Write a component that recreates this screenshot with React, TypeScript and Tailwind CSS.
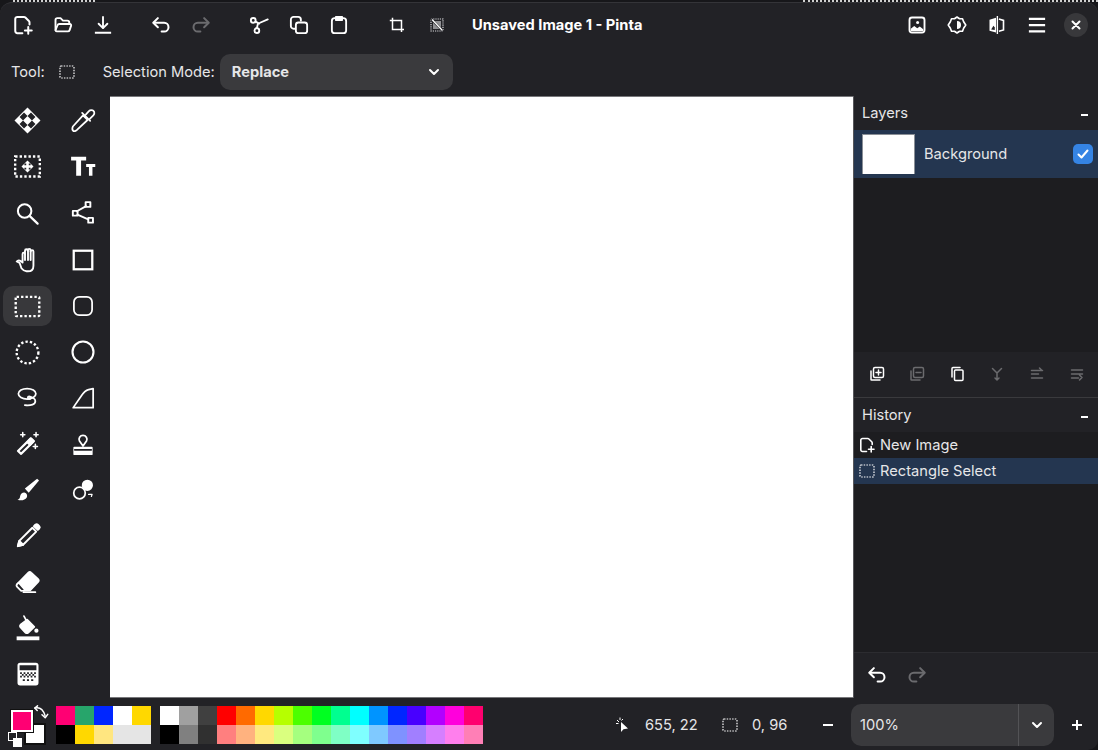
import type { ReactNode } from 'react'

// Pinta main window, everything sits on a 16px icon grid like the GTK symbolic set
function Ico({ children, size = 20, className = 'text-white', fill = 'none', sw = 1.5 }: { children: ReactNode; size?: number; className?: string; fill?: string; sw?: number }) {
  return (
    <svg width={size} height={size} viewBox="0 0 16 16" fill={fill} stroke="currentColor" strokeWidth={sw} strokeLinecap="round" strokeLinejoin="round" className={className}>
      {children}
    </svg>
  )
}

function IconBtn({ children }: { children: ReactNode }) {
  return <button className="flex h-[40px] w-[40px] items-center justify-center">{children}</button>
}

const dim = 'text-[#6b6b6e]'
const bg = '#222226'

const NewDoc = ({ size = 20 }: { size?: number }) => (
  <Ico size={size} sw={1.6}>
    <path d="M7.500 14.500H3.500A1.700 1.700 0 0 1 1.800 12.800V3.200A1.700 1.700 0 0 1 3.500 1.500h5.300c.4 0 .8.2 1.100.5l2.800 2.800c.3.300.5.700.5 1.100V7.500" />
    <path d="M12.200 9.500v5.500M9.500 12.300h5.500" />
  </Ico>
)
const OpenFolder = () => (
  <Ico>
    <path d="M2 12V4a1.500 1.500 0 0 1 1.500-1.500h2.500L8 4.500h3.500A1.500 1.500 0 0 1 13 6v1" />
    <path d="M2 12.200 3.600 8.200A1.500 1.500 0 0 1 5 7.200h8.500a1 1 0 0 1 1 1.300l-1.200 3.600a1.500 1.500 0 0 1-1.400 1H3a1 1 0 0 1-1-.9Z" />
  </Ico>
)
const SaveDown = () => (
  <Ico>
    <path d="M8 1.500v9M4.500 7 8 10.500 11.500 7" />
    <path d="M1.500 14.200h13" strokeLinecap="butt" />
  </Ico>
)
const Undo = ({ className = 'text-white' }: { className?: string }) => (
  <Ico className={className} sw={1.6}>
    <path d="M5.500 2.500 1.800 6.200 5.500 9.800" />
    <path d="M2.300 6.200H10.500a3.500 3.500 0 0 1 0 7H8.500" />
  </Ico>
)
const Redo = ({ className = 'text-white' }: { className?: string }) => (
  <Ico className={className} sw={1.6}>
    <path d="M10.500 2.500 14.200 6.200 10.500 9.800" />
    <path d="M13.700 6.200H5.500a3.500 3.500 0 0 0 0 7H7.500" />
  </Ico>
)
const Cut = () => (
  <Ico>
    <circle cx="3.400" cy="4.300" r="1.900" />
    <circle cx="6.300" cy="12.500" r="1.900" />
    <path d="M5.200 5.300 8.200 6.900M6.300 10.500 7 7.500M8.800 6.200 15 3.500" />
  </Ico>
)
const Copy = () => (
  <Ico>
    <path d="M4.500 11H3.700A2.200 2.200 0 0 1 1.500 8.800V3.700A2.200 2.200 0 0 1 3.700 1.500h3.600A2.200 2.200 0 0 1 9.500 3.700v.8" />
    <rect x="5.500" y="6" width="9" height="8.500" rx="2" />
  </Ico>
)
const Paste = () => (
  <Ico>
    <rect x="2.300" y="2.500" width="11.400" height="12" rx="2.200" />
    <path d="M5.500 1.500h5v2.500h-5z" fill="currentColor" />
  </Ico>
)
const Crop = () => (
  <Ico size={16} sw={1.5}>
    <path d="M.8 3.500H12.500V15" strokeLinejoin="miter" strokeLinecap="butt" />
    <path d="M3.500.8V12.500H15" strokeLinejoin="miter" strokeLinecap="butt" />
  </Ico>
)
const Deselect = () => (
  <svg width="14" height="14" viewBox="0 0 14 14" fill="none" className="text-[#d8d8da]" stroke="currentColor">
    <rect x="1" y="1" width="12" height="12" strokeDasharray="1.200 1" strokeWidth="1.200" />
    <path d="M3 3h8v8H3z" fill="currentColor" opacity="0.6" stroke="none" />
    <path d="M1 1 13 13" strokeWidth="2.400" stroke={bg} />
    <path d="M2 1.500 12.500 12.500" strokeWidth="1.300" stroke="white" />
  </svg>
)
const ImageIco = () => (
  <Ico>
    <rect x="2" y="2" width="12" height="12" rx="2" />
    <circle cx="8.500" cy="6" r="1.200" fill="currentColor" stroke="none" />
    <path d="M3 12.800V11l2.800-2.200 2.400 1.700 2-1.300 2.800 2.200v1.400z" fill="currentColor" stroke="none" />
  </Ico>
)
const Adjust = () => (
  <Ico sw={1.300}>
    <path d="M8 1.600 10 3h2.400l.9 2.400L15 8l-1.700 2.600-.9 2.400H10l-2 1.400L6 13H3.600l-.9-2.400L1 8l1.700-2.600.9-2.400H6z" />
    <path d="M8 4.800a3.200 3.200 0 0 1 0 6.400z" fill="currentColor" stroke="none" />
  </Ico>
)
const Effects = () => (
  <svg width="20" height="20" viewBox="0 0 16 16" className="text-white" fill="none" stroke="currentColor">
    <path d="M7.200 2.200 2 3.800v8.800l5.200 1.300z" fill="currentColor" stroke="none" />
    <path d="M3.300 11.500 5.200 8.500l1 1.500v2z" fill={bg} stroke="none" />
    <path d="M9.500 3.200 13.200 4.300v7.700l-3.700 1" strokeWidth="1.300" />
    <path d="M8.300 .8v14.400" strokeWidth="1.100" />
  </svg>
)
const MenuIco = () => (
  <Ico sw={1.800}>
    <path d="M1.500 3h13M1.500 8h13M1.500 13h13" strokeLinecap="butt" />
  </Ico>
)
const DottedRect = ({ size = 16, sw = 1.200 }: { size?: number; sw?: number }) => (
  <svg width={size} height={size} viewBox="0 0 16 16" fill="none" stroke="currentColor" strokeWidth={sw} strokeDasharray="1.500 1.200" className="text-white">
    <rect x="1" y="2" width="14" height="12" rx="1" />
  </svg>
)
const Chevron = () => (
  <svg width="12" height="12" viewBox="0 0 12 12" fill="none" stroke="currentColor" strokeWidth="2" strokeLinecap="round" strokeLinejoin="round" className="text-white">
    <path d="M2 4 6 8 10 4" />
  </svg>
)

const toolsLeft: ReactNode[] = [
  <svg width="31" height="31" viewBox="0 0 16 16" className="text-white">
    <path d="M8 1.300 14.700 8 8 14.700 1.300 8z" fill="currentColor" />
    <path d="M8 5.700 5.700 8 3.900 6.200 6.200 3.900zM8 5.700 10.300 8 12.100 6.200 9.800 3.900zM5.700 8 8 10.300 6.200 12.100 3.900 9.800zM10.300 8 8 10.300 9.800 12.100 12.100 9.800z" fill={bg} />
    <path d="M8 6.300 9.700 8 8 9.700 6.300 8z" fill="currentColor" />
  </svg>,
  <svg width="29" height="29" viewBox="0 0 16 16" fill="none" className="text-white">
    <rect x="1.200" y="2.500" width="13.600" height="11" stroke="currentColor" strokeWidth="1.300" strokeDasharray="1.300 1.150" />
    <path d="M8 4.700 11.300 8 8 11.300 4.700 8z" fill="currentColor" />
    <path d="M6.300 6.300h1v1h-1zM8.700 6.300h1v1h-1zM6.300 8.700h1v1h-1zM8.700 8.700h1v1h-1z" fill={bg} />
  </svg>,
  <Ico size={27} sw={1.200}>
    <circle cx="6.300" cy="6.500" r="4" />
    <path d="M9.200 9.400 14 14" strokeWidth="1.300" />
  </Ico>,
  <Ico size={30} sw={1}>
    <path d="M3.500 9.500 2 8.800c.6-.8 1.400-.8 2.200-.2l.9.8V4.800c0-1 1.300-1 1.300 0V3c0-1 1.500-1 1.500 0v-.2c0-1 1.500-1 1.500 0V3.400c0-.9 1.500-.9 1.500 0V11c0 2-1.300 3-3 3H7.200c-1.300 0-2-.7-2.700-1.600z" />
    <path d="M6.400 5v3M8 3v5M9.400 3v5" />
  </Ico>,
  <svg width="29" height="29" viewBox="0 0 16 16" fill="none" stroke="currentColor" className="text-white">
    <rect x="1.500" y="2.700" width="13" height="10.600" rx="0.500" strokeWidth="1.300" strokeDasharray="1.300 1.150" />
  </svg>,
  <svg width="29" height="29" viewBox="0 0 16 16" fill="none" stroke="currentColor" className="text-white">
    <circle cx="8" cy="8" r="6" strokeWidth="1.300" strokeDasharray="1.300 1.150" />
  </svg>,
  <Ico size={28} sw={1}>
    <ellipse cx="7.500" cy="5.600" rx="5" ry="3" />
    <path d="M8.700 7.400c1.500 0 3.500.8 3.500 2.300 0 1.900-2.400 2.800-6 2.400" />
    <circle cx="8.700" cy="7.900" r="0.800" />
  </Ico>,
  <Ico size={28} sw={1}>
    <path d="M2.300 13.200 9.600 6l1.700 1.600-7.200 7.200z" transform="translate(0 -1.200)" strokeWidth="1.300" />
    <path d="M7.500 8.200 9.600 6l1.700 1.600-2.100 2.200z" transform="translate(0 -1.200)" fill="currentColor" />
    <path d="M5 1.500v2.400M3.800 2.700h2.400M12.600 1.500v2.400M11.400 2.700h2.400M12.200 8.200v2.400M11 9.400h2.400" strokeWidth="0.900" />
  </Ico>,
  <Ico size={28} fill="currentColor" sw={0}>
    <path d="M14.300 2.600 13.200 1.600 6.200 7.200 8.400 9.500z" />
    <path d="M2 13.500c1-.2 1.400-1 1.500-2 .2-1.300 1.500-2.300 2.700-2 1.200.3 1.700 1.700 1 2.900C6.500 13.700 4 14.300 2 13.500z" />
  </Ico>,
  <Ico size={28} sw={1.100}>
    <path d="M2.200 13.800 3 10.800 10.500 3.300l2.200 2.200L5.200 13z" />
    <path d="M2.200 13.800 5.200 13 3 10.800z" fill="currentColor" />
    <path d="M11.400 2.400 12.200 1.600c.5-.4 1-.4 1.400 0l.8.8c.4.4.4.9 0 1.300l-.8.8z" fill="currentColor" />
  </Ico>,
  <Ico size={28} sw={1}>
    <path d="M1.800 9.200 8.200 2.700c.5-.5 1.100-.5 1.600 0l4 3.700c.5.500.5 1.100 0 1.600l-4.600 4.800-3.600.1z" fill="currentColor" />
    <path d="M1.800 9.200c-.5.600-.5 1.100 0 1.600l2.300 2.300 1.500-.1.600-.6-3.500-4z" fill={bg} />
    <path d="M5.400 13.800h6.800" />
  </Ico>,
  <Ico size={28} sw={1}>
    <path d="M5.700 1.200 7 3.600M3.900 5.900 7.500 3.200l4.100 4.200-3.400 3.200c-.6.500-1.100.5-1.700 0L3.900 7.800c-.6-.6-.6-1.300 0-1.900z" fill="currentColor" />
    <circle cx="12.800" cy="9.500" r="1.200" fill="currentColor" stroke="none" />
    <path d="M1.500 12.800h13v2.200h-13z" fill="currentColor" stroke="none" />
  </Ico>,
  <Ico size={28} fill="currentColor" sw={0}>
    <path fillRule="evenodd" d="M3.500 1.500h9A1.500 1.500 0 0 1 14 3v10a1.500 1.500 0 0 1-1.500 1.500h-9A1.500 1.500 0 0 1 2 13V3a1.500 1.500 0 0 1 1.500-1.500zM3.200 3v2.800h9.600V3zM3.500 7v1h1V7zm2 0v1h1V7zm2 0v1h1V7zm2 0v1h1V7zm2 0v1h1V7zM4.500 8v1h1V8zm2 0v1h1V8zm2 0v1h1V8zm2 0v1h1V8zM3.500 9v1h1V9zm2 0v1h1V9zm2 0v1h1V9zm2 0v1h1V9zm2 0v1h1V9zM5 11v1h1.200v-1zm2.400 0v1h1.200v-1zm2.400 0v1H11v-1z" />
  </Ico>,
]

const toolsRight: ReactNode[] = [
  <Ico size={28} sw={1}>
    <path d="M2.400 14.200c-.7-.7-.5-1.800-.2-2.500L8 5.400l2.600 2.600-6.200 5.800c-.7.400-1.400 1-2 .4z" />
    <path d="M7.500 3.900 12.100 8.500M9.700 4.800l1.700-1.900c.7-.8 2-.8 2.600-.1.700.7.600 1.800-.1 2.500L12 7.200" />
  </Ico>,
  <svg width="28" height="28" viewBox="0 0 16 16" fill="currentColor" className="text-white">
    <path d="M1.200 2.700h8.600v2.200H6.900v8.600H4.100V4.900H1.200zM9.800 6.800h5.200v1.700h-1.600v5h-2v-5H9.800z" />
  </svg>,
  <Ico size={28} sw={1.100}>
    <rect x="9.500" y="1.800" width="2.700" height="2.700" />
    <rect x="2.200" y="6.800" width="2.700" height="2.700" />
    <rect x="11" y="10.800" width="2.700" height="2.700" />
    <path d="M4.500 7 9.800 4.100M4.800 8.900 11 11.700" />
  </Ico>,
  <Ico size={28} sw={1.300}>
    <rect x="2.700" y="2.700" width="10.600" height="10.600" strokeLinejoin="miter" />
  </Ico>,
  <Ico size={28} sw={1}>
    <rect x="2.800" y="2.800" width="10.400" height="10.400" rx="3" />
  </Ico>,
  <Ico size={28} sw={1.200}>
    <circle cx="8" cy="8" r="6" />
  </Ico>,
  <Ico size={28} sw={1}>
    <path d="M13.800 2.700v10.800H2.400l4.300-6.200c1.200-1.900 2.600-3.700 4.500-4.100z" />
  </Ico>,
  <Ico size={28} sw={1}>
    <path d="M8 9.200 6 6.300c-.8-1.500.3-3.200 2-3.200s2.800 1.700 2 3.200z" />
    <path d="M3 10h10v3.800H3z" fill="currentColor" />
    <path d="M3.300 11.300h9.400" stroke={bg} />
  </Ico>,
  <Ico size={28} sw={1}>
    <circle cx="6" cy="9.700" r="3.300" />
    <circle cx="10.500" cy="5.300" r="2.700" fill="currentColor" />
    <path d="M11.200 10.500h2l-.4 1.200" strokeWidth="0.700" />
  </Ico>,
]

const palette1 = [
  ['#ff0073', '#27a56b', '#0026ff', '#ffffff', '#ffd800'],
  ['#000000', '#ffd800', '#ffe680', '#e5e5e5', '#e5e5e5'],
]
const palette2 = [
  ['#ffffff', '#a0a0a0', '#404040', '#ff0000', '#ff6a00', '#ffd800', '#b6ff00', '#4cff00', '#00ff21', '#00ff90', '#00ffff', '#0094ff', '#0026ff', '#4800ff', '#b200ff', '#ff00dc', '#ff006e'],
  ['#000000', '#808080', '#303030', '#ff7f7f', '#ffb27f', '#ffe97f', '#daff7f', '#a5ff7f', '#7fff8e', '#7fffc5', '#7fffff', '#7fc9ff', '#7f92ff', '#a17fff', '#d67fff', '#ff7fed', '#ff7fb6'],
]

function Palette({ rows }: { rows: string[][] }) {
  return (
    <div className="flex flex-col">
      {rows.map((row, i) => (
        <div key={i} className="flex">
          {row.map((c, j) => (
            <div key={j} className="h-[19px] w-[19px]" style={{ backgroundColor: c }} />
          ))}
        </div>
      ))}
    </div>
  )
}

function ToolColumn({ tools, selected }: { tools: ReactNode[]; selected?: number }) {
  return (
    <div className="flex w-[49px] flex-col gap-[6px]">
      {tools.map((icon, i) => (
        <button
          key={i}
          className={`flex h-[40px] w-[49px] shrink-0 items-center justify-center rounded-[10px] ${i === 2 || i === 3 ? 'mt-[1px]' : ''} ${i === selected ? 'bg-[#38383b]' : ''}`}
        >
          {icon}
        </button>
      ))}
    </div>
  )
}

export default function App() {
  return (
    <div className="flex h-[750px] w-[1098px] flex-col overflow-hidden bg-[#17171a] font-['Inter',sans-serif] text-[14.67px] text-[#e6e6e8]">
      {/* what shows of the window behind */}
      <div className="flex h-[2px] shrink-0 overflow-hidden">
        <div className="ml-[13px] w-[82px] border-t-2 border-dotted border-[#d0d0d0]" />
        <div className="ml-auto w-[295px] border-t-2 border-dotted border-[#d0d0d0]" />
      </div>

      <div className="flex min-h-0 flex-1 flex-col overflow-hidden rounded-t-[12px] rounded-br-[10px] border-t border-[#343438] bg-[#222226]">
        {/* Header bar */}
        <div className="flex h-[45px] shrink-0 items-center pb-[1px] pl-[3px] pr-[10px]">
          <IconBtn><NewDoc /></IconBtn>
          <IconBtn><OpenFolder /></IconBtn>
          <IconBtn><SaveDown /></IconBtn>
          <div className="w-[18px]" />
          <IconBtn><Undo /></IconBtn>
          <IconBtn><Redo className={dim} /></IconBtn>
          <div className="w-[18px]" />
          <IconBtn><Cut /></IconBtn>
          <IconBtn><Copy /></IconBtn>
          <IconBtn><Paste /></IconBtn>
          <div className="w-[18px]" />
          <IconBtn><Crop /></IconBtn>
          <IconBtn><Deselect /></IconBtn>
          <span className="ml-[15px] font-bold text-white">Unsaved Image 1 - Pinta</span>
          <div className="flex-1" />
          <IconBtn><ImageIco /></IconBtn>
          <IconBtn><Adjust /></IconBtn>
          <IconBtn><Effects /></IconBtn>
          <IconBtn><MenuIco /></IconBtn>
          <button className="ml-[7px] flex h-[24px] w-[24px] items-center justify-center rounded-full bg-[#38383b]">
            <svg width="10" height="10" viewBox="0 0 10 10" stroke="white" strokeWidth="2" strokeLinecap="round">
              <path d="M1.500 1.500 8.500 8.500M8.500 1.500 1.500 8.500" />
            </svg>
          </button>
        </div>

        {/* Tool options */}
        <div className="flex h-[48px] shrink-0 items-center pl-[11px]">
          <span>Tool:</span>
          <span className="ml-[14px]"><DottedRect /></span>
          <span className="ml-[28px]">Selection Mode:</span>
          <div className="ml-[5px] flex h-[36px] w-[233px] items-center justify-between rounded-[10px] bg-[#3a3a3d] pl-[12px] pr-[13px]">
            <span className="font-bold">Replace</span>
            <Chevron />
          </div>
        </div>

        {/* Workspace */}
        <div className="flex min-h-0 flex-1">
          <div className="flex w-[110px] shrink-0 gap-[6px] pl-[3px] pt-[4px]">
            <ToolColumn tools={toolsLeft} selected={4} />
            <ToolColumn tools={toolsRight} />
          </div>

          <div className="min-w-0 flex-1 border-y border-[#77777a] bg-white" />

          {/* Docks */}
          <div className="flex w-[245px] shrink-0 flex-col border-l border-[#56565a]">
            <div className="flex h-[34px] shrink-0 items-center justify-between pl-[8px] pr-[10px]">
              <span>Layers</span>
              <div className="h-[2px] w-[7px] translate-y-[2px] bg-white" />
            </div>
            <div className="flex h-[222px] shrink-0 flex-col bg-[#1d1d20]">
              <div className="flex h-[48px] shrink-0 items-center bg-[#243650] pl-[8px] pr-[5px]">
                <div className="h-[40px] w-[53px] border border-b-0 border-[#8a8f96] bg-white" />
                <span className="ml-[9px]">Background</span>
                <div className="ml-auto flex h-[20px] w-[20px] items-center justify-center rounded-[5px] bg-[#3584e4]">
                  <svg width="14" height="14" viewBox="0 0 14 14" fill="none" stroke="white" strokeWidth="2" strokeLinecap="round" strokeLinejoin="round">
                    <path d="M2.500 7.500 5.500 10.500 11.500 3.500" />
                  </svg>
                </div>
              </div>
            </div>
            <div className="flex h-[46px] shrink-0 items-center border-b border-[#3a3a3d] pb-[1px] pl-[3px]">
              <IconBtn>
                <Ico size={16}>
                  <path d="M2 5v8.500a.5.5 0 0 0 .5.5H11" />
                  <rect x="4.500" y="1.500" width="10" height="10" rx="1.500" />
                  <path d="M9.500 4v5M7 6.500h5" />
                </Ico>
              </IconBtn>
              <IconBtn>
                <Ico size={16} className={dim}>
                  <path d="M2 5v8.500a.5.5 0 0 0 .5.5H11" />
                  <rect x="4.500" y="1.500" width="10" height="10" rx="1.500" />
                  <path d="M7 6.500h5" />
                </Ico>
              </IconBtn>
              <IconBtn>
                <Ico size={16}>
                  <path d="M3 11V2.500A1 1 0 0 1 4 1.500h7" />
                  <rect x="5.500" y="4" width="8.500" height="10.500" rx="1" />
                </Ico>
              </IconBtn>
              <IconBtn>
                <Ico size={16} className={dim}>
                  <path d="M3.500 2.500 8 7l4.500-4.500M8 7v6.500M6 12l2 2 2-2" />
                </Ico>
              </IconBtn>
              <IconBtn>
                <Ico size={16} className={dim}>
                  <path d="M2.500 4.500h11M10.500 2 13 4.500M2.500 8h7M2.500 12h11" />
                </Ico>
              </IconBtn>
              <IconBtn>
                <Ico size={16} className={dim}>
                  <path d="M2.500 4h11M2.500 8h11M2.500 12h7M10.500 14 13 11.500 10.500 9" />
                </Ico>
              </IconBtn>
            </div>
            <div className="flex h-[34px] shrink-0 items-center justify-between pl-[8px] pr-[10px]">
              <span>History</span>
              <div className="h-[2px] w-[7px] translate-y-[2px] bg-white" />
            </div>
            <div className="flex min-h-0 flex-1 flex-col bg-[#1d1d20]">
              <div className="flex h-[26px] shrink-0 items-center pl-[5px]">
                <NewDoc size={16} />
                <span className="ml-[5px]">New Image</span>
              </div>
              <div className="flex h-[26px] shrink-0 items-center bg-[#243650] pl-[5px]">
                <DottedRect />
                <span className="ml-[5px]">Rectangle Select</span>
              </div>
            </div>
            <div className="flex h-[46px] shrink-0 items-center border-t border-[#2c2c30] pb-[1px] pl-[3px]">
              <IconBtn><Undo /></IconBtn>
              <IconBtn><Redo className={dim} /></IconBtn>
            </div>
          </div>
        </div>

        {/* Status bar */}
        <div className="flex h-[52px] shrink-0 items-center pr-[15px] pt-[2px]">
          {/* primary / secondary colour well */}
          <div className="relative h-[52px] w-[56px] shrink-0 self-start">
            <svg width="16" height="17" viewBox="0 0 16 17" fill="none" stroke="white" strokeWidth="1.500" strokeLinecap="round" strokeLinejoin="round" className="absolute left-[33px] top-[5px]">
              <path d="M2 3c4-1 8 1 10 7.500" />
              <path d="M4.500 .8 1.800 3l2.400 2.500M9 9.800l3.200 3 2.500-3.400" />
            </svg>
            <div className="absolute left-[24px] top-[23px] h-[22px] w-[22px] border-2 border-[#111] bg-white" />
            <div className="absolute left-[10px] top-[9px] h-[24px] w-[24px] border border-[#111]">
              <div className="h-full w-full border-2 border-white bg-[#ff0073]" />
            </div>
            <div className="absolute left-[8px] top-[32px] h-[9px] w-[9px] border border-white bg-[#222226]" />
            <div className="absolute left-[13px] top-[38px] h-[9px] w-[9px] bg-white" />
          </div>
          <Palette rows={palette1} />
          <div className="w-[9px]" />
          <Palette rows={palette2} />
          <div className="flex-1" />
          <svg width="16" height="16" viewBox="0 0 16 16" fill="white">
            <path d="M6 5v10l2.500-2.800L13 11.500z" />
            <path d="M2 3l2 2M5 .5v2.500M1 6.500h2.500M8 2 6.500 3.500" stroke="white" strokeWidth="1" />
          </svg>
          <span className="ml-[14px] w-[53px] whitespace-nowrap">655, 22</span>
          <span className="ml-[24px]"><DottedRect /></span>
          <span className="ml-[14px] w-[35px] whitespace-nowrap">0, 96</span>
          <div className="ml-[36px] h-[2px] w-[10px] bg-white" />
          <div className="ml-[18px] flex h-[42px] w-[203px] rounded-[10px] bg-[#3a3a3d]">
            <span className="flex flex-1 items-center pl-[9px]">100%</span>
            <div className="flex w-[36px] items-center justify-center border-l border-[#535356]">
              <Chevron />
            </div>
          </div>
          <svg width="12" height="12" viewBox="0 0 12 12" stroke="white" strokeWidth="2" className="ml-[17px]">
            <path d="M6 1v10M1 6h10" />
          </svg>
        </div>
      </div>
    </div>
  )
}
